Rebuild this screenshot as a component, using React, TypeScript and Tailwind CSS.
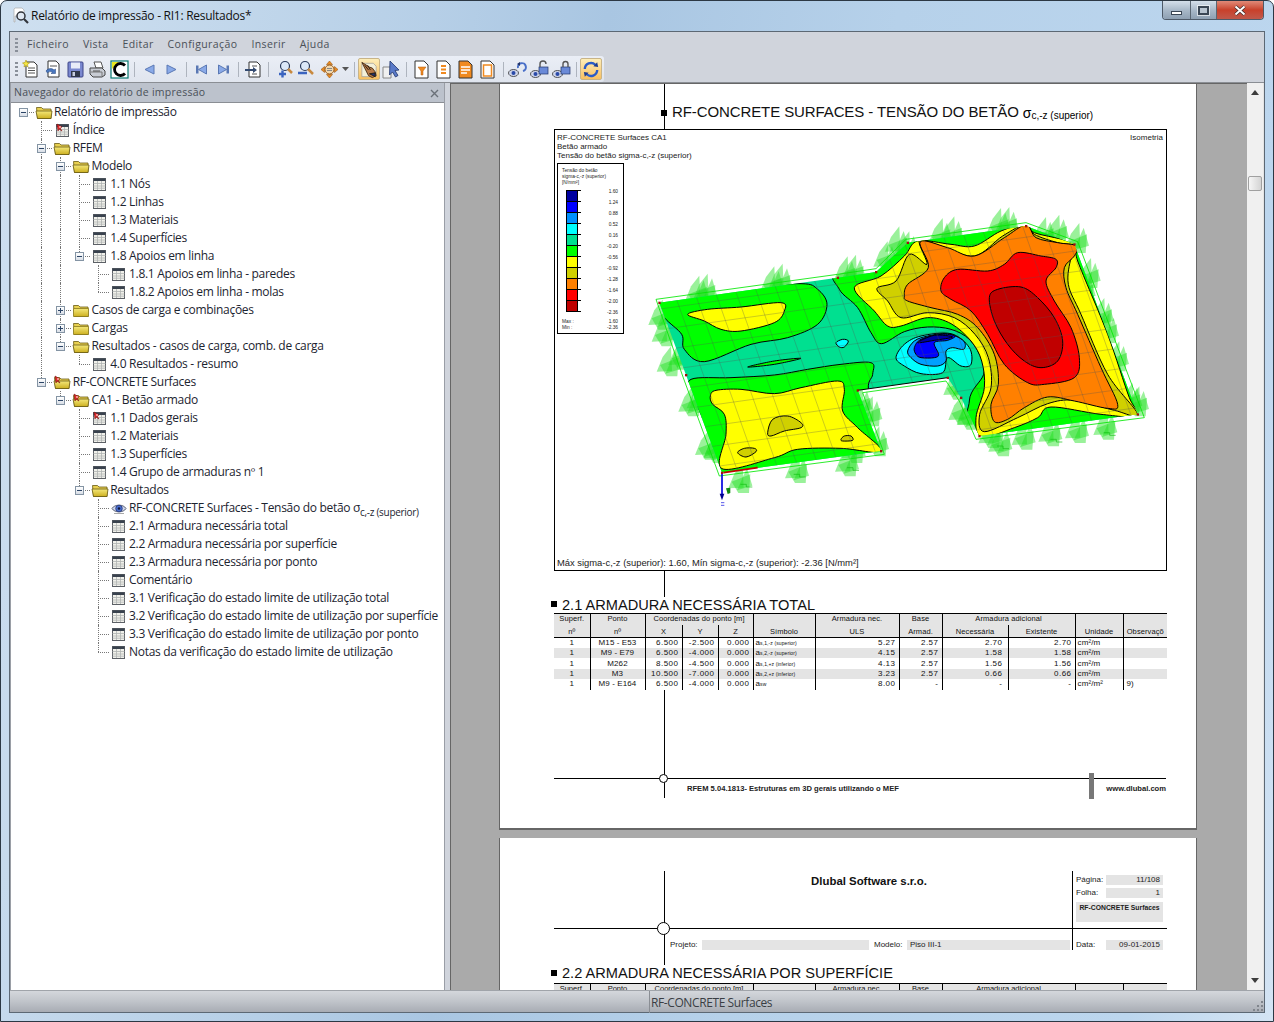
import React from 'react';

type IconName = 'open' | 'closed' | 'pinfolder' | 'table' | 'pintable' | 'eye' | 'none';
type Row = { level: number; icon: IconName; label: React.ReactNode; exp?: '+' | '-' };

const rows: Row[] = [
  { level: 0, icon: 'open', label: 'Relatório de impressão', exp: '-' },
  { level: 1, icon: 'pintable', label: 'Índice' },
  { level: 1, icon: 'open', label: 'RFEM', exp: '-' },
  { level: 2, icon: 'open', label: 'Modelo', exp: '-' },
  { level: 3, icon: 'table', label: '1.1 Nós' },
  { level: 3, icon: 'table', label: '1.2 Linhas' },
  { level: 3, icon: 'table', label: '1.3 Materiais' },
  { level: 3, icon: 'table', label: '1.4 Superfícies' },
  { level: 3, icon: 'table', label: '1.8 Apoios em linha', exp: '-' },
  { level: 4, icon: 'table', label: '1.8.1 Apoios em linha - paredes' },
  { level: 4, icon: 'table', label: '1.8.2 Apoios em linha - molas' },
  { level: 2, icon: 'closed', label: 'Casos de carga e combinações', exp: '+' },
  { level: 2, icon: 'closed', label: 'Cargas', exp: '+' },
  { level: 2, icon: 'open', label: 'Resultados - casos de carga, comb. de carga', exp: '-' },
  { level: 3, icon: 'table', label: '4.0 Resultados - resumo' },
  { level: 1, icon: 'pinfolder', label: 'RF-CONCRETE Surfaces', exp: '-' },
  { level: 2, icon: 'pinfolder', label: 'CA1 - Betão armado', exp: '-' },
  { level: 3, icon: 'pintable', label: '1.1 Dados gerais' },
  { level: 3, icon: 'table', label: '1.2 Materiais' },
  { level: 3, icon: 'table', label: '1.3 Superfícies' },
  { level: 3, icon: 'table', label: '1.4 Grupo de armaduras nº 1' },
  { level: 3, icon: 'open', label: 'Resultados', exp: '-' },
  {
    level: 4,
    icon: 'eye',
    label: (
      <>
        RF-CONCRETE Surfaces - Tensão do betão σ<sub className="text-[10px] align-[-1px] leading-none">c,-z (superior)</sub>
      </>
    ),
  },
  { level: 4, icon: 'table', label: '2.1 Armadura necessária total' },
  { level: 4, icon: 'table', label: '2.2 Armadura necessária por superfície' },
  { level: 4, icon: 'table', label: '2.3 Armadura necessária por ponto' },
  { level: 4, icon: 'table', label: 'Comentário' },
  { level: 4, icon: 'table', label: '3.1 Verificação do estado limite de utilização total' },
  { level: 4, icon: 'table', label: '3.2 Verificação do estado limite de utilização por superfície' },
  { level: 4, icon: 'table', label: '3.3 Verificação do estado limite de utilização por ponto' },
  { level: 4, icon: 'table', label: 'Notas da verificação do estado limite de utilização' },
];

const guideX = (level: number) => 11.5 + level * 18.75;

// does another sibling follow this level after row i?
const continues = (i: number, level: number) => {
  for (let j = i + 1; j < rows.length; j++) {
    if (rows[j].level < level) return false;
    if (rows[j].level === level) return true;
  }
  return false;
};

function FolderIcon({ open, pin }: { open?: boolean; pin?: boolean }) {
  return (
    <svg width="18" height="15" viewBox="0 0 18 15">
      <defs>
        <linearGradient id="fold" x1="0" y1="0" x2="0" y2="1">
          <stop offset="0" stopColor="#f4e87a" />
          <stop offset="1" stopColor="#cdb020" />
        </linearGradient>
      </defs>
      <path d="M1.500 2.500h5l1.500 1.500h8v9.500H2.500z" fill="#e8d050" stroke="#6a5c14" strokeWidth="0.800" />
      {open ? (
        <path d="M1 6h16l-1 7.500H2.500z" fill="url(#fold)" stroke="#6a5c14" strokeWidth="0.800" />
      ) : (
        <path d="M1.500 5.500h15v8h-15z" fill="url(#fold)" stroke="#8a7a1c" strokeWidth="0.800" />
      )}
      {pin && <PinMark />}
    </svg>
  );
}

function PinMark() {
  return (
    <g>
      <path d="M2 1l5 3-2 1 2 3-3-2-1 2z" fill="#e02a2a" stroke="#801010" strokeWidth="0.600" />
      <circle cx="5" cy="4" r="1" fill="#ffb0b0" />
    </g>
  );
}

function TableIcon({ pin }: { pin?: boolean }) {
  return (
    <svg width="15" height="14" viewBox="0 0 15 14">
      <rect x="1.500" y="1.500" width="12" height="12" fill="#f0f0ea" stroke="#5c6066" />
      <rect x="1.500" y="1.500" width="12" height="2.500" fill="#39424e" />
      <path d="M1.500 6.500h12M1.500 9h12M1.500 11.200h12M5.500 4v9M9.500 4v9" stroke="#b0b4b2" strokeWidth="0.800" />
      {pin && <PinMark />}
    </svg>
  );
}

function EyeIcon() {
  return (
    <svg width="16" height="13" viewBox="0 0 16 13">
      <path d="M1 6.500C3.500 2 12.500 2 15 6.500C12.500 11 3.500 11 1 6.500z" fill="#cfd6ea" stroke="#50586c" strokeWidth="0.900" />
      <circle cx="8" cy="6.500" r="3.300" fill="#4a70d0" stroke="#1a2a70" strokeWidth="0.700" />
      <circle cx="8" cy="6.500" r="1.300" fill="#10183c" />
      <path d="M3 11.500h10" stroke="#a8a8a8" strokeWidth="1" />
    </svg>
  );
}

function TreeIcon({ name }: { name: IconName }) {
  if (name === 'open') return <FolderIcon open />;
  if (name === 'closed') return <FolderIcon />;
  if (name === 'pinfolder') return <FolderIcon open pin />;
  if (name === 'table') return <TableIcon />;
  if (name === 'pintable') return <TableIcon pin />;
  if (name === 'eye') return <EyeIcon />;
  return null;
}

function Tree() {
  return (
    <div className="flex-1 bg-white overflow-hidden font-['Open_Sans',sans-serif] text-[12px] text-[#1c2430] tracking-[-0.3px]">
      {rows.map((r, i) => {
        const gx = guideX(r.level);
        return (
          <div key={i} className="relative h-[18px] flex items-center whitespace-nowrap" style={{ paddingLeft: 23 + r.level * 18.75 }}>
            {Array.from({ length: r.level }, (_, k) => k + 1).map((k) => {
              const more = continues(i, k);
              if (k < r.level && !more) return null;
              return (
                <span
                  key={k}
                  className="absolute top-0 border-l border-dotted border-[#777]"
                  style={{ left: guideX(k), height: more ? 18 : 9 }}
                />
              );
            })}
            <span className="absolute top-[9px] border-t border-dotted border-[#777]" style={{ left: gx, width: 11 }} />
            {r.exp && (
              <span
                className="absolute top-[5px] w-[9px] h-[9px] border border-[#8494a4] bg-gradient-to-b from-white to-[#d8dee6] flex items-center justify-center"
                style={{ left: gx - 4 }}
              >
                <span className="relative w-[5px] h-[1px] bg-[#2b4466]">
                  {r.exp === '+' && <span className="absolute left-[2px] -top-[2px] w-[1px] h-[5px] bg-[#2b4466]" />}
                </span>
              </span>
            )}
            <span className="w-[19px] flex justify-center shrink-0 mr-[1px]">
              <TreeIcon name={r.icon} />
            </span>
            <span>{r.label}</span>
          </div>
        );
      })}
    </div>
  );
}

// toolbar drawings
const icons: Record<string, React.ReactNode> = {
  new: (
    <>
      <path d="M5 3h8l3 3v12H5z" fill="#fff" stroke="#333" />
      <path d="M7 9h7M7 11.500h7M7 14h7" stroke="#555" />
      <path d="M5 1l1 2.500 2.500.5-2 1.500.5 2.500-2-1.500-2 1.500.5-2.500-2-1.500 2.500-.5z" fill="#f6e640" stroke="#a89410" strokeWidth="0.600" />
    </>
  ),
  open: (
    <>
      <path d="M5 2h8l3 3v13H5z" fill="#fff" stroke="#333" />
      <path d="M7 7h7" stroke="#555" />
      <path d="M3 12c2-3 6-3 8-1l1.500-1v4.500H8l1.500-1.200c-1.500-1-3.500-1-5 .7z" fill="#4a78c0" stroke="#20407a" strokeWidth="0.500" />
    </>
  ),
  save: (
    <>
      <rect x="3" y="3" width="15" height="15" rx="1" fill="#7a88d0" stroke="#3c4488" />
      <rect x="6" y="3.500" width="9" height="6" fill="#e8ecf8" />
      <rect x="6" y="12" width="9" height="6" fill="#30384a" />
      <rect x="7.500" y="13" width="2.500" height="4" fill="#c8cede" />
    </>
  ),
  print: (
    <>
      <path d="M7 3h7l2 6H9z" fill="#fff" stroke="#555" />
      <path d="M3 9h12l3 3v4l-3 2H6l-3-3z" fill="#c8ccd4" stroke="#444" />
      <path d="M4 13h11v4" fill="none" stroke="#777" />
      <path d="M6 12h7" stroke="#555" />
    </>
  ),
  color: (
    <>
      <rect x="2" y="2" width="17" height="17" fill="#fff" stroke="#0a7a70" strokeWidth="1.200" />
      <path d="M3 3h7l-7 7z" fill="#e8e820" />
      <path d="M16 6.500a6 6 0 1 0 0 8" fill="none" stroke="#000" strokeWidth="2.800" />
    </>
  ),
  left: <path d="M6 10.500l9-4.500v9z" fill="#8aaae8" stroke="#5a78b4" />,
  right: <path d="M15 10.500l-9-4.500v9z" fill="#8aaae8" stroke="#5a78b4" />,
  first: (
    <>
      <rect x="5" y="6.500" width="2.500" height="8" fill="#5a78b4" />
      <path d="M7.500 10.500l8-4.500v9z" fill="#8aaae8" stroke="#5a78b4" />
    </>
  ),
  last: (
    <>
      <rect x="13.500" y="6.500" width="2.500" height="8" fill="#5a78b4" />
      <path d="M13.500 10.500l-8-4.500v9z" fill="#8aaae8" stroke="#5a78b4" />
    </>
  ),
  export: (
    <>
      <path d="M6 3h8l3 3v12H6z" fill="#fff" stroke="#333" />
      <path d="M9 7h5M9 15h5" stroke="#555" />
      <path d="M2 10h8V8l4 3-4 3v-2H2z" fill="#334a70" />
    </>
  ),
  zoomin: (
    <>
      <circle cx="12" cy="7" r="4.500" fill="#dce8f8" stroke="#2a3a5a" strokeWidth="1.200" />
      <path d="M15 10l4 4" stroke="#c88a40" strokeWidth="2.500" />
      <path d="M6 15h7M9.500 11.500v7" stroke="#3a64c0" strokeWidth="2.400" />
    </>
  ),
  zoomout: (
    <>
      <circle cx="10" cy="7" r="4.500" fill="#dce8f8" stroke="#2a3a5a" strokeWidth="1.200" />
      <path d="M13 10l5 5" stroke="#c88a40" strokeWidth="2.500" />
      <path d="M3 14h9" stroke="#3a64c0" strokeWidth="2.400" />
    </>
  ),
  gear: (
    <>
      <path d="M10.500 2l3 3.500h-6zM10.500 19l3-3.500h-6zM2 10.500L5.500 7.500v6zM19 10.500l-3.500-3v6z" fill="#e88a20" stroke="#a05a10" strokeWidth="0.600" />
      <circle cx="10.500" cy="10.500" r="4.500" fill="#f0d8b0" stroke="#a05a10" />
      <path d="M8 9.500h5M8 11.500h5" stroke="#888" />
    </>
  ),
  hand: (
    <>
      <path d="M3 4h12l3 3v11H3z" fill="#f4f0d8" stroke="#999" strokeWidth="0.700" />
      <path d="M3 3l8 5 3 1 3 4 1 4-4 2-4-2-4-8z" fill="#b87a48" stroke="#402810" strokeWidth="0.900" />
      <path d="M6 6l4 5M9 6l3 5M11 15l6 3v-4z" fill="#20347a" stroke="#20180c" strokeWidth="0.900" />
    </>
  ),
  arrow: (
    <>
      <path d="M2 8h8v11H2z" fill="#f0f0f0" stroke="#888" />
      <path d="M9 2l9 9-4 .5 3 5-2.500 1.500-3-5-3 3z" fill="#5a7ac8" stroke="#20346a" strokeWidth="0.800" />
    </>
  ),
  docfilter: (
    <>
      <path d="M4 2h9l4 4v13H4z" fill="#fff" stroke="#333" />
      <path d="M7 8h8l-3 4v4h-2v-4z" fill="#f08a20" stroke="#b05a10" strokeWidth="0.500" />
    </>
  ),
  doclines: (
    <>
      <path d="M4 2h9l4 4v13H4z" fill="#fff" stroke="#333" />
      <path d="M8 7h5M8 10.500h5M8 14h5" stroke="#f08a20" strokeWidth="2" />
    </>
  ),
  docfull: (
    <>
      <path d="M4 2h9l4 4v13H4z" fill="#f08a20" stroke="#333" />
      <path d="M6 8h9M6 11h9M6 14h6" stroke="#fff" strokeWidth="1.500" />
    </>
  ),
  docempty: (
    <>
      <path d="M4 2h9l4 4v13H4z" fill="#fff" stroke="#333" />
      <rect x="6.500" y="6" width="8" height="11" fill="#fff" stroke="#f08a20" strokeWidth="1.500" />
    </>
  ),
  eyelink: (
    <>
      <ellipse cx="6.500" cy="14" rx="5" ry="3.500" fill="#cfd6ea" stroke="#333" strokeWidth="0.800" />
      <circle cx="6.500" cy="14" r="2" fill="#2a4aa8" />
      <path d="M11 9a4 4 0 1 1 5 3" fill="none" stroke="#4a70c8" strokeWidth="2" />
      <path d="M10 5l3-2 0 4z" fill="#20346a" />
    </>
  ),
  eyeopen: (
    <>
      <ellipse cx="6.500" cy="15" rx="5" ry="3.500" fill="#cfd6ea" stroke="#333" strokeWidth="0.800" />
      <circle cx="6.500" cy="15" r="2" fill="#2a4aa8" />
      <rect x="10" y="8" width="9" height="7" fill="#6a8ad8" stroke="#20346a" strokeWidth="0.700" />
      <path d="M11 8V5a3 3 0 0 1 6 0" fill="none" stroke="#555" strokeWidth="1.400" />
    </>
  ),
  eyelock: (
    <>
      <ellipse cx="6.500" cy="15" rx="5" ry="3.500" fill="#cfd6ea" stroke="#333" strokeWidth="0.800" />
      <circle cx="6.500" cy="15" r="2" fill="#2a4aa8" />
      <rect x="10" y="8" width="9" height="7" fill="#6a8ad8" stroke="#20346a" strokeWidth="0.700" />
      <path d="M12 8V5a2.500 2.500 0 0 1 5 0v3" fill="none" stroke="#555" strokeWidth="1.400" />
    </>
  ),
  refresh: (
    <>
      <path d="M4 10a6.500 6.500 0 0 1 11-4.500" fill="none" stroke="#2a5cc8" strokeWidth="2.500" />
      <path d="M17 11a6.500 6.500 0 0 1-11 4.500" fill="none" stroke="#2a5cc8" strokeWidth="2.500" />
      <path d="M13 7l5 1-1-5zM8 14l-5-1 1 5z" fill="#1c3c90" />
    </>
  ),
};

function Tool({ name, active }: { name: string; active?: boolean }) {
  return (
    <span
      className={
        active
          ? 'w-[22px] h-[22px] flex items-center justify-center rounded-[2px] border border-[#c8b488] bg-gradient-to-b from-[#fdeeb8] to-[#f8c060]'
          : 'w-[22px] h-[22px] flex items-center justify-center'
      }
    >
      <svg width="21" height="21" viewBox="0 0 21 21">
        {icons[name]}
      </svg>
    </span>
  );
}

function Sep() {
  return (
    <span className="w-[8px] flex justify-center">
      <span className="w-[1px] h-[15px] bg-[#aeb4be]" />
    </span>
  );
}

function Grip() {
  return (
    <span className="w-[3px] h-[14px] flex flex-col justify-between">
      <span className="h-[2px] bg-[#8a909a]" />
      <span className="h-[2px] bg-[#8a909a]" />
      <span className="h-[2px] bg-[#8a909a]" />
      <span className="h-[2px] bg-[#8a909a]" />
    </span>
  );
}

function Toolbar() {
  return (
    <div className="h-[26px] bg-[#d0d4dc] flex">
      <div className="flex items-center w-[594px] bg-gradient-to-b from-[#eaeef6] to-[#e0e5ee] rounded-r-[3px] pl-[5px]">
        <Grip />
        <span className="w-[2px]" />
        {['new', 'open', 'save', 'print', 'color'].map((n) => (
          <Tool key={n} name={n} />
        ))}
        <Sep />
        <Tool name="left" />
        <Tool name="right" />
        <Sep />
        <Tool name="first" />
        <Tool name="last" />
        <Sep />
        <Tool name="export" />
        <Sep />
        <Tool name="zoomin" />
        <Tool name="zoomout" />
        <span className="w-[2px]" />
        <Tool name="gear" />
        <span className="w-[10px] flex justify-center">
          <svg width="7" height="4" viewBox="0 0 7 4">
            <path d="M0 0h7L3.500 4z" fill="#555" />
          </svg>
        </span>
        <Sep />
        <Tool name="hand" active />
        <Tool name="arrow" />
        <Sep />
        <Tool name="docfilter" />
        <Tool name="doclines" />
        <Tool name="docfull" />
        <Tool name="docempty" />
        <span className="w-[1px]" />
        <Sep />
        <span className="-ml-[1px]" />
        <Tool name="eyelink" />
        <Tool name="eyeopen" />
        <Tool name="eyelock" />
        <Sep />
        <Tool name="refresh" active />
      </div>
    </div>
  );
}

// contour plot, coordinates are 3x the size on screen
const slab =
  '55,305 590,230 705,213 800,125 1155,75 1300,130 1490,640 1015,705 960,590 920,530 650,568 720,750 243,815 135,522';

type P = [number, number];
const smooth = (pts: P[]) => {
  const n = pts.length;
  let d = `M${pts[0][0]} ${pts[0][1]}`;
  for (let i = 0; i < n; i++) {
    const p0 = pts[(i - 1 + n) % n];
    const p1 = pts[i];
    const p2 = pts[(i + 1) % n];
    const p3 = pts[(i + 2) % n];
    d += `C${p1[0] + (p2[0] - p0[0]) / 6} ${p1[1] + (p2[1] - p0[1]) / 6} ${p2[0] - (p3[0] - p1[0]) / 6} ${p2[1] - (p3[1] - p1[1]) / 6} ${p2[0]} ${p2[1]}`;
  }
  return d + 'Z';
};

const bands: { fill: string; pts: P[] }[] = [
  // green, left top
  { fill: '#00ff00', pts: [[30, 290], [300, 260], [480, 248], [530, 265], [558, 310], [530, 370], [440, 410], [330, 430], [190, 482], [130, 445], [122, 400], [70, 350]] },
  // green, left bottom
  { fill: '#00ff00', pts: [[150, 535], [270, 530], [400, 522], [500, 505], [600, 490], [690, 485], [695, 520], [685, 580], [760, 780], [500, 820], [220, 840], [180, 650], [150, 585]] },
  // green, right part
  { fill: '#00ff00', pts: [[590, 200], [800, 100], [1160, 50], [1330, 120], [1520, 660], [1020, 730], [985, 600], [1028, 520], [1020, 470], [985, 415], [930, 385], [860, 378], [790, 392], [722, 428], [690, 395], [650, 320], [595, 265]] },
  // yellow
  { fill: '#ffff00', pts: [[140, 340], [200, 325], [300, 318], [420, 305], [430, 330], [400, 365], [300, 390], [240, 385], [190, 360]] },
  { fill: '#ffff00', pts: [[208, 585], [225, 568], [300, 565], [400, 578], [480, 560], [590, 540], [610, 565], [605, 630], [650, 680], [722, 752], [600, 742], [470, 745], [400, 770], [243, 803], [255, 700], [250, 640], [215, 610]] },
  { fill: '#ffff00', pts: [[640, 260], [720, 225], [790, 165], [830, 120], [930, 130], [1000, 135], [1080, 90], [1155, 70], [1180, 95], [1300, 128], [1310, 180], [1400, 400], [1465, 590], [1495, 645], [1380, 640], [1230, 618], [1190, 650], [1120, 680], [1022, 708], [1005, 650], [1030, 560], [1022, 480], [990, 420], [930, 368], [860, 350], [780, 375], [740, 375], [700, 330]] },
  // olive
  { fill: '#d0d000', pts: [[380, 695], [395, 655], [440, 645], [480, 665], [480, 680], [430, 690], [390, 705]] },
  { fill: '#d0d000', pts: [[600, 715], [610, 705], [630, 705], [635, 718], [605, 720]] },
  { fill: '#d0d000', pts: [[290, 755], [310, 742], [340, 742], [345, 752], [315, 768]] },
  { fill: '#d0d000', pts: [[708, 262], [765, 240], [805, 160], [858, 190], [835, 118], [900, 135], [1000, 165], [1085, 105], [1155, 70], [1180, 100], [1250, 125], [1305, 135], [1290, 170], [1282, 250], [1320, 340], [1400, 520], [1490, 640], [1420, 628], [1300, 598], [1220, 608], [1130, 650], [1030, 692], [1016, 640], [1050, 560], [1042, 470], [1002, 400], [940, 350], [860, 335], [780, 350], [740, 300]] },
  // orange
  { fill: '#ff8000', pts: [[790, 285], [800, 250], [862, 200], [838, 122], [920, 140], [1000, 165], [1090, 110], [1155, 72], [1185, 110], [1250, 125], [1308, 135], [1300, 165], [1270, 200], [1275, 260], [1310, 340], [1380, 500], [1430, 610], [1400, 622], [1300, 600], [1220, 588], [1150, 620], [1100, 655], [1060, 662], [1050, 610], [1072, 550], [1060, 460], [1010, 380], [950, 340], [870, 320], [800, 300]] },
  // red
  { fill: '#ff0000', pts: [[900, 270], [910, 230], [950, 205], [1040, 210], [1090, 190], [1130, 155], [1200, 165], [1245, 175], [1245, 200], [1215, 240], [1240, 300], [1290, 380], [1315, 470], [1300, 530], [1210, 550], [1160, 545], [1090, 490], [1040, 400], [990, 330], [930, 295]] },
  { fill: '#c00000', pts: [[1045, 290], [1070, 265], [1140, 258], [1190, 290], [1240, 350], [1265, 420], [1250, 480], [1200, 500], [1150, 480], [1100, 430], [1060, 360]] },
  // swirl
  { fill: '#00ffff', pts: [[585, 425], [605, 415], [622, 420], [610, 438], [595, 438]] },
  { fill: '#00ffff', pts: [[765, 470], [790, 430], [840, 405], [930, 398], [985, 440], [990, 490], [960, 495], [920, 470], [905, 515], [840, 518], [790, 495]] },
  { fill: '#00a0ff', pts: [[800, 450], [820, 420], [860, 405], [920, 398], [968, 420], [968, 445], [935, 440], [915, 450], [915, 480], [890, 495], [840, 490], [810, 470]] },
  { fill: '#0000ff', pts: [[820, 440], [840, 415], [900, 400], [942, 405], [920, 418], [880, 425], [893, 460], [880, 470], [840, 470], [825, 460]] },
  { fill: '#0000a0', pts: [[830, 425], [880, 403], [935, 408], [880, 418]] },
  // thin sliver in the teal
  { fill: '#00ff00', pts: [[320, 498], [400, 480], [480, 472], [400, 490]] },
];

// load arrows along the edges, they clump together into green tufts
const glow: P[] = [
  [60, 340], [70, 390], [85, 480], [120, 460], [150, 600], [175, 590], [200, 730], [225, 740], [300, 830], [470, 800], [620, 780], [640, 740], [710, 720], [690, 630], [660, 600],
  [170, 268], [195, 262], [395, 240], [420, 232], [615, 210], [640, 205], [735, 165], [770, 120], [800, 135], [900, 95], [935, 90], [1075, 65], [1100, 62], [1210, 92], [1250, 85], [1310, 110],
  [1345, 215], [1330, 260], [1385, 335], [1400, 380], [1430, 465], [1490, 600], [1470, 590], [1395, 670], [1230, 690], [1080, 720], [1050, 695], [985, 640], [945, 550], [960, 625], [1150, 700], [1310, 680],
];

function Contour() {
  return (
    <svg width="520" height="310" viewBox="0 0 1560 930" className="ml-[17px] mt-[38px] shrink-0">
      <defs>
        <clipPath id="slab">
          <polygon points={slab} />
        </clipPath>
      </defs>
      {glow.map(([x, y], i) => (
        <g key={i} fill="#1fe01f" fillOpacity="0.45">
          <path d={`M${x - 38} ${y + 32}L${x - 20} ${y - 12}L${x + 5} ${y - 44}L${x + 8} ${y + 30}Z`} />
          <path d={`M${x - 12} ${y + 38}L${x + 18} ${y - 30}L${x + 34} ${y + 24}Z`} />
          <path d={`M${x - 28} ${y + 12}L${x + 28} ${y - 10}L${x + 24} ${y + 46}L${x - 8} ${y + 46}Z`} />
        </g>
      ))}
      {[[1090, 735], [1250, 715], [1410, 695], [480, 820], [640, 800], [320, 850]].map(([x, y]) => (
        <path key={x} d={`M${x - 22} ${y}h18v8h18`} fill="none" stroke="#12c012" strokeWidth="2" />
      ))}
      <polygon
        points="45,295 590,220 705,203 795,115 1155,65 1310,122 1510,650 1005,715 955,600 915,540 665,575 730,760 235,825 125,525"
        fill="none"
        stroke="#00e800"
        strokeWidth="2.500"
      />
      <polygon points={slab} fill="#00e090" />
      <g clipPath="url(#slab)">
        {bands.map((b, i) => (
          <path key={i} d={smooth(b.pts)} fill={b.fill} stroke="#000" strokeWidth="3" />
        ))}
        {Array.from({ length: 13 }, (_, i) => (
          <path key={i} d={`M0 ${270 + i * 62}L1560 ${52 + i * 62}`} stroke="#555" strokeOpacity="0.45" strokeWidth="2" />
        ))}
        {Array.from({ length: 28 }, (_, i) => (
          <path key={i} d={`M${-60 + i * 62} 0L${270 + i * 62} 930`} stroke="#555" strokeOpacity="0.45" strokeWidth="2" />
        ))}
      </g>
      <path d="M650 568L920 530" stroke="#000" strokeWidth="3" />
      <path d="M248 815L350 800" stroke="#c00000" strokeWidth="5" />
      <path d="M243 815V885" stroke="#0000e0" strokeWidth="5" />
      <path d="M236 878h14l-7 20z" fill="#000090" />
      <path d="M240 905h10M240 913h10" stroke="#0000e0" strokeWidth="2" />
      <path d="M255 862l13 -2v16l-8 3z" fill="#108a10" />
      {slab.split(' ').map((p) => {
        const [x, y] = p.split(',').map(Number);
        return <rect key={p} x={x - 3} y={y - 3} width="7" height="7" fill="#a01010" />;
      })}
    </svg>
  );
}

const legendColors = ['bg-[#0000a0]', 'bg-[#0000ff]', 'bg-[#0090ff]', 'bg-[#00ffff]', 'bg-[#00e090]', 'bg-[#00ff00]', 'bg-[#ffff00]', 'bg-[#d0d000]', 'bg-[#ff8000]', 'bg-[#ff0000]', 'bg-[#c00000]'];
const legendValues = ['1.60', '1.24', '0.88', '0.52', '0.16', '-0.20', '-0.56', '-0.92', '-1.28', '-1.64', '-2.00', '-2.36'];

function Legend() {
  return (
    <div className="w-[67px] h-[171px] border border-black flex flex-col shrink-0 text-[4.8px] leading-[6px] text-[#222] pl-[4px] pt-[4px]">
      <div>Tensão do betão</div>
      <div>sigma-c,-z (superior)</div>
      <div>[N/mm²]</div>
      <div className="flex mt-[4px] pl-[4px]">
        <div className="border-t border-black">
          {legendColors.map((c) => (
            <div key={c} className="w-[15px] h-[11px] border-b border-black">
              <div className={`w-[12px] h-[10px] border-l border-r border-black ${c}`} />
            </div>
          ))}
        </div>
        <div className="flex-1 -mt-[4px] pr-[5px] text-right">
          {legendValues.map((v) => (
            <div key={v} className="h-[11px] leading-[11px]">
              {v}
            </div>
          ))}
        </div>
      </div>
      <div className="flex justify-between pr-[5px] mt-[1px]">
        <span>Max :</span>
        <span>1.60</span>
      </div>
      <div className="flex justify-between pr-[5px]">
        <span>Min :</span>
        <span>-2.36</span>
      </div>
    </div>
  );
}

const colWidths = [36, 55, 37, 36, 35, 62, 84, 43, 66, 67, 48, 44];

function Cols() {
  return (
    <colgroup>
      {colWidths.map((w, i) => (
        <col key={i} style={{ width: w }} />
      ))}
    </colgroup>
  );
}

const HeadA = 'h-[11px] p-0 font-normal border-l border-black first:border-l-0 text-center';

function ReportHead({ short }: { short?: boolean }) {
  return (
    <thead className="bg-[#e4e4e4] text-[#111] text-[7.5px] leading-[10px]">
      <tr className="border-t border-black">
        <th className={HeadA}>Superf.</th>
        <th className={HeadA}>Ponto</th>
        <th colSpan={3} className={HeadA}>Coordenadas do ponto [m]</th>
        <th className={HeadA} />
        <th className={HeadA}>Armadura nec.</th>
        <th className={HeadA}>Base</th>
        <th colSpan={2} className={HeadA}>Armadura adicional</th>
        <th className={HeadA} />
        <th className={HeadA} />
      </tr>
      {!short && (
        <tr className="border-b border-black">
          {['nº', 'nº', 'X', 'Y', 'Z', 'Símbolo', 'ULS', 'Armad.', 'Necessária', 'Existente', 'Unidade', 'Observaçõ'].map((h) => (
            <th key={h} className="h-[13px] p-0 pt-[2px] font-normal border-l border-black first:border-l-0 text-center whitespace-nowrap overflow-hidden">
              {h}
            </th>
          ))}
        </tr>
      )}
    </thead>
  );
}

const tableRows = [
  ['M15 - E53', '6.500', '-2.500', '0.000', 's,1,-z (superior)', '5.27', '2.57', '2.70', '2.70', 'cm²/m', ''],
  ['M9 - E79', '6.500', '-4.000', '0.000', 's,2,-z (superior)', '4.15', '2.57', '1.58', '1.58', 'cm²/m', ''],
  ['M262', '8.500', '-4.500', '0.000', 's,1,+z (inferior)', '4.13', '2.57', '1.56', '1.56', 'cm²/m', ''],
  ['M3', '10.500', '-7.000', '0.000', 's,2,+z (inferior)', '3.23', '2.57', '0.66', '0.66', 'cm²/m', ''],
  ['M9 - E164', '6.500', '-4.000', '0.000', 'sw', '8.00', '-', '-', '-', 'cm²/m²', '9)'],
];

const cell = 'h-[10.4px] p-0 leading-[10px] border-l border-black first:border-l-0';

function ReportTable() {
  return (
    <table className="relative w-[613px] table-fixed border-collapse bg-white font-['Liberation_Sans',sans-serif] text-[8px] tracking-[0.1px] text-[#111]">
      <Cols />
      <ReportHead />
      <tbody>
        {tableRows.map((r, i) => (
          <tr key={i} className={i % 2 === 1 ? 'bg-[#e4e4e4]' : 'bg-white'}>
            <td className={`${cell} text-center`}>1</td>
            <td className={`${cell} text-center`}>{r[0]}</td>
            <td className={`${cell} text-right pr-[3px] tracking-[0.5px]`}>{r[1]}</td>
            <td className={`${cell} text-right pr-[3px] tracking-[0.5px]`}>{r[2]}</td>
            <td className={`${cell} text-right pr-[3px] tracking-[0.5px]`}>{r[3]}</td>
            <td className={`${cell} pl-[2px] whitespace-nowrap`}>
              a<span className="text-[5px]">{r[4]}</span>
            </td>
            <td className={`${cell} text-right pr-[3px] tracking-[0.5px]`}>{r[5]}</td>
            <td className={`${cell} text-right pr-[3px] tracking-[0.5px]`}>{r[6]}</td>
            <td className={`${cell} text-right pr-[5px] tracking-[0.5px]`}>{r[7]}</td>
            <td className={`${cell} text-right pr-[3px] tracking-[0.5px]`}>{r[8]}</td>
            <td className={`${cell} pl-[2px]`}>{r[9]}</td>
            <td className={`${cell} pl-[3px]`}>{r[10]}</td>
          </tr>
        ))}
      </tbody>
    </table>
  );
}

function Bullet({ className }: { className: string }) {
  return <span className={`w-[6px] h-[6px] bg-black shrink-0 ${className}`} />;
}

function PageOne() {
  return (
    <div className="relative w-[698px] h-[746px] shrink-0 bg-white border-l border-r border-b-2 border-[#666] pl-[54px] font-['Liberation_Sans',sans-serif] text-black">
      <span className="absolute left-[164px] top-0 bottom-[30px] w-[1px] bg-black" />
      <div className="relative flex items-center h-[45px] -ml-[54px] pl-[161px] pt-[12px]">
        <Bullet className="mr-[5px]" />
        <span className="text-[15px] tracking-[-0.1px] text-[#111]">RF-CONCRETE SURFACES - TENSÃO DO BETÃO</span>
        <span className="text-[14px] ml-[4px] mt-[2px]">σ</span>
        <span className="text-[10px] mt-[6px]">c,-z (superior)</span>
      </div>
      <div className="relative w-[613px] h-[442px] border border-black bg-white flex flex-col pl-[1px] pt-[3px] text-[8px] leading-[9px] text-[#222]">
        <div className="flex justify-between pr-[3px] pl-[1px]">
          <span>RF-CONCRETE Surfaces CA1</span>
          <span>Isometria</span>
        </div>
        <div className="pl-[1px]">Betão armado</div>
        <div className="pl-[1px]">Tensão do betão sigma-c,-z (superior)</div>
        <div className="flex mt-[3px] ml-[1px]">
          <Legend />
          <Contour />
        </div>
        <div className="mt-auto mb-[2px] pl-[1px] text-[9.4px] leading-[10px] whitespace-nowrap">
          Máx sigma-c,-z (superior): 1.60, Mín sigma-c,-z (superior): -2.36 [N/mm²]
        </div>
      </div>
      <div className="relative flex items-center h-[42px] -ml-[3px] pt-[25px]">
        <Bullet className="mr-[5px] -mt-[1px]" />
        <span className="bg-white text-[14.6px] leading-[16px] text-[#111]">2.1 ARMADURA NECESSÁRIA TOTAL</span>
      </div>
      <ReportTable />
      <div className="relative mt-[88px] h-[20px] border-t border-black w-[612px] flex items-center text-[7.6px] font-bold text-[#222]">
        <span className="absolute left-[105px] -top-[5px] w-[9px] h-[9px] rounded-full border border-black bg-white" />
        <span className="absolute left-[535px] -top-[6px] w-[5px] h-[26px] bg-[#777]" />
        <span className="ml-[133px] mt-[1px]">RFEM 5.04.1813- Estruturas em 3D gerais utilizando o MEF</span>
        <span className="ml-auto mt-[1px]">www.dlubal.com</span>
      </div>
    </div>
  );
}

function Field({ label, value, labelW, boxW, right }: { label: string; value: string; labelW: number; boxW: number; right?: boolean }) {
  return (
    <div className="flex items-center h-[10px]">
      <span style={{ width: labelW }}>{label}</span>
      <span className={`h-[10px] leading-[10px] bg-[#e4e4e4] px-[3px] ${right ? 'text-right' : ''}`} style={{ width: boxW }}>
        {value}
      </span>
    </div>
  );
}

function PageTwo() {
  return (
    <div className="relative w-[698px] flex-1 mt-[8px] bg-white border-l border-r border-[#666] pl-[54px] font-['Liberation_Sans',sans-serif] text-[8px] text-[#222] overflow-hidden">
      <span className="absolute left-[164px] top-[33px] h-[94px] w-[1px] bg-black" />
      <div className="relative w-[613px] h-[58px] mt-[33px] border-b border-black flex">
        <span className="absolute left-[103px] -bottom-[7px] w-[13px] h-[13px] rounded-full border border-black bg-white" />
        <div className="w-[518px] text-center pl-[142px] pt-[4px] pr-[30px] text-[11.4px] font-bold leading-[12px] text-[#111]">Dlubal Software s.r.o.</div>
        <div className="w-[95px] border-l border-black pl-[3px] pt-[4px] flex flex-col gap-[3px]">
          <Field label="Página:" value="11/108" labelW={30} boxW={57} right />
          <Field label="Folha:" value="1" labelW={30} boxW={57} right />
          <div className="w-[87px] h-[20px] bg-[#e4e4e4] mt-[1px] text-[6.8px] font-bold text-center leading-[11px]">RF-CONCRETE Surfaces</div>
        </div>
      </div>
      <div className="relative w-[613px] flex items-start h-[21px] pt-[11px]">
        <span className="ml-[116px]" />
        <Field label="Projeto:" value="" labelW={32} boxW={167} />
        <span className="w-[5px]" />
        <Field label="Modelo:" value="Piso III-1" labelW={33} boxW={163} />
        <span className="ml-[2px] h-[21px] -mt-[11px] w-[1px] bg-black" />
        <span className="ml-[3px]" />
        <Field label="Data:" value="09-01-2015" labelW={30} boxW={57} right />
      </div>
      <div className="flex items-center h-[33px] -ml-[3px] pt-[13px]">
        <Bullet className="mr-[5px] -mt-[1px]" />
        <span className="bg-white text-[14.6px] leading-[16px] text-[#111]">2.2 ARMADURA NECESSÁRIA POR SUPERFÍCIE</span>
      </div>
      <table className="relative w-[613px] table-fixed border-collapse bg-white">
        <Cols />
        <ReportHead short />
      </table>
    </div>
  );
}

function Scrollbar() {
  return (
    <div className="w-[17px] shrink-0 bg-[#f0f0f0] border-r border-[#e4e4e4] flex flex-col items-center relative">
      <svg width="8" height="5" viewBox="0 0 8 5" className="mt-[7px]">
        <path d="M0 5L4 0l4 5z" fill="#3c3c3c" />
      </svg>
      <div className="w-[14px] h-[15px] mt-[81px] rounded-[2px] border border-[#a0a0a0] bg-gradient-to-r from-[#f6f6f6] to-[#d4d4d4]" />
      <svg width="8" height="5" viewBox="0 0 8 5" className="mt-auto mb-[7px]">
        <path d="M0 0l4 5 4-5z" fill="#3c3c3c" />
      </svg>
    </div>
  );
}

function WinButtons() {
  return (
    <div className="flex h-[19px] mr-[9px] border border-t-0 border-[#4e5a68] rounded-b-[4px] overflow-hidden">
      <span className="w-[28px] flex items-center justify-center border-r border-[#5a6672] bg-gradient-to-b from-[#d4dfea] via-[#a9b9c9] to-[#8ea0b2]">
        <span className="w-[11px] h-[4px] mt-[5px] bg-white border border-[#3a4654]" />
      </span>
      <span className="w-[26px] flex items-center justify-center border-r border-[#5a6672] bg-gradient-to-b from-[#d4dfea] via-[#a9b9c9] to-[#8ea0b2]">
        <span className="w-[11px] h-[9px] border-2 border-[#3a4654] bg-[#b8c4d0] outline outline-1 outline-white/60" />
      </span>
      <span className="w-[46px] flex items-center justify-center bg-gradient-to-b from-[#e08a78] via-[#c8402a] to-[#c0584a]">
        <svg width="12" height="11" viewBox="0 0 12 11">
          <path d="M1.500 1.500l9 8M10.500 1.500l-9 8" stroke="#3a2a2a" strokeWidth="3.400" />
          <path d="M1.500 1.500l9 8M10.500 1.500l-9 8" stroke="#fff" strokeWidth="2" />
        </svg>
      </span>
    </div>
  );
}

export default function App() {
  return (
    <div className="w-[1274px] h-[1022px] flex flex-col rounded-t-[7px] border border-[#2c3844] overflow-hidden bg-[linear-gradient(100deg,#cfe0f0,#b6cfe7_30%,#a9c6e2_42%,#b6d1ea_62%,#bcd6ee_90%,#d4e4f4)] font-['Open_Sans',sans-serif]">
      {/* title bar */}
      <div className="h-[30px] flex items-start shrink-0">
        <svg width="18" height="18" viewBox="0 0 18 18" className="ml-[11px] mt-[6px]">
          <path d="M3 1h7l2 2v6H3v6H2V2z" fill="#fff" stroke="#aaa" strokeWidth="0.700" />
          <circle cx="9" cy="9" r="4" fill="#dfe8f2" stroke="#30343a" strokeWidth="1.500" />
          <path d="M12 12l4 4" stroke="#30343a" strokeWidth="2.200" />
        </svg>
        <span className="ml-[1px] mt-[6px] text-[12px] leading-[18px] tracking-[-0.27px] text-[#111]">Relatório de impressão - RI1: Resultados*</span>
        <span className="ml-auto">
          <WinButtons />
        </span>
      </div>

      <div className="flex-1 min-h-0 mx-[8px] flex flex-col border border-[#5c6874] bg-[#d0d4dc]">
        {/* menu */}
        <div className="h-[24px] shrink-0 flex items-center pl-[5px] pt-[2px] text-[10.5px] text-[#4a5058] tracking-[0.4px]">
          <Grip />
          <div className="flex gap-[14px] ml-[9px]">
            {['Ficheiro', 'Vista', 'Editar', 'Configuração', 'Inserir', 'Ajuda'].map((m) => (
              <span key={m}>{m}</span>
            ))}
          </div>
        </div>
        <Toolbar />

        <div className="flex-1 min-h-0 flex border-t border-[#8a8e94]">
          {/* navigator */}
          <div className="w-[435px] shrink-0 flex flex-col border-r border-[#9a9ea6] border-l border-l-[#9a9ea6]">
            <div className="h-[20px] shrink-0 bg-[#bcc2cc] border-b border-[#8a8e94] flex items-center pl-[3px] pr-[5px] pt-[1px] text-[10.5px] text-[#4a5058] tracking-[0.25px]">
              <span>Navegador do relatório de impressão</span>
              <svg width="9" height="9" viewBox="0 0 9 9" className="ml-auto">
                <path d="M1 1l7 7M8 1L1 8" stroke="#6a7078" strokeWidth="1.400" />
              </svg>
            </div>
            <Tree />
          </div>
          <div className="w-[5px] shrink-0" />
          {/* document */}
          <div className="flex-1 min-w-0 flex">
            <div className="flex-1 min-w-0 bg-[#aaaaaa] border-l border-t border-[#666] pl-[48px] flex flex-col overflow-hidden">
              <PageOne />
              <PageTwo />
            </div>
            <Scrollbar />
          </div>
        </div>

        {/* status bar */}
        <div className="h-[22px] shrink-0 flex items-center border-t border-[#a0a4aa] bg-gradient-to-b from-[#d4d7dc] via-[#c0c4ca] to-[#a8acb4] text-[12px] tracking-[-0.4px] text-[#3a3e44]">
          <span className="w-[639px]" />
          <span className="border-l border-[#8a8e94] pl-[1px] h-[22px] leading-[24px]">RF-CONCRETE Surfaces</span>
          <svg width="10" height="10" viewBox="0 0 10 10" className="ml-auto mr-[1px] mt-[8px]">
            <path d="M8 0h2v2H8zM4 4h2v2H4zM8 4h2v2H8zM0 8h2v2H0zM4 8h2v2H4zM8 8h2v2H8z" fill="#80858c" />
          </svg>
        </div>
      </div>
      <div className="h-[8px] shrink-0" />
    </div>
  );
}
